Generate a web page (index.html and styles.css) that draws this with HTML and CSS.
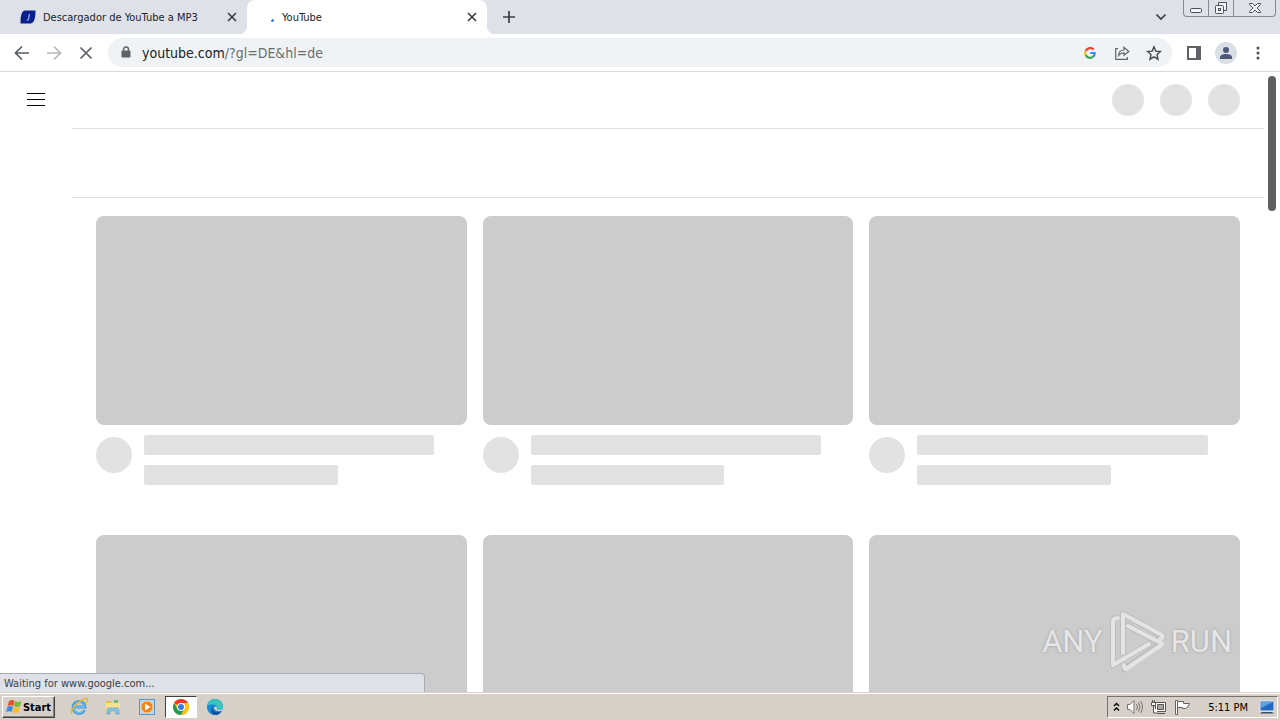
FILE: index.html
```html
<!DOCTYPE html>
<html lang="de">
<head>
    <meta charset="UTF-8">
    <meta name="viewport" content="width=device-width, initial-scale=1.0">
    <title>YouTube</title>
    <link rel="stylesheet" href="styles.css">
</head>
<body>
    <div class="desktop">
        <header class="tabs">
            <div class="tab">
                <svg class="favicon" viewBox="0 0 16 16"><path d="M5 1.500h10.500c0 5-.5 9-2 11-1 1.500-2 2-4 2H.5c0-5 .3-8 1.500-10.500C2.700 2.500 3.500 1.500 5 1.500z" fill="#0b1f8c"/><path d="M9.500 5l-1 5c-.2 1-.8 1.300-1.800 1" fill="none" stroke="#8fa2f0" stroke-width="1.300"/></svg>
                <span class="tab__title">Descargador de YouTube a MP3</span>
                <button class="tab__close" aria-label="Close tab"><svg width="10" height="10" viewBox="0 0 10 10"><path d="M1 1l8 8M9 1L1 9"/></svg></button>
            </div>
            <div class="tab active">
                <svg class="favicon" viewBox="0 0 16 16"><path d="M8.500 12.500l2-2" stroke="#1a73e8" stroke-width="2" fill="none"/></svg>
                <span class="tab__title">YouTube</span>
                <button class="tab__close" aria-label="Close tab"><svg width="10" height="10" viewBox="0 0 10 10"><path d="M1 1l8 8M9 1L1 9"/></svg></button>
            </div>
            <button class="tab__new" aria-label="New tab"><svg width="12" height="12" viewBox="0 0 12 12"><path d="M6 0v12M0 6h12"/></svg></button>
            <button class="tab__search" aria-label="Search tabs"><svg width="12" height="8" viewBox="0 0 12 8"><path d="M1.500 1.500L6 6l4.500-4.500"/></svg></button>
            <div class="window">
                <button class="window__min" aria-label="Minimize"><svg width="12" height="16" viewBox="0 0 12 16"><rect x=".5" y="8.500" width="11" height="4" rx="1"/></svg></button>
                <button class="window__max" aria-label="Restore"><svg width="14" height="16" viewBox="0 0 14 16"><path d="M4.500 5V2.500h8v8H10"/><rect x="1.500" y="5.500" width="8" height="8" rx="1"/><rect x="4.500" y="8.500" width="2" height="2"/></svg></button>
                <button class="window__close" aria-label="Close"><svg width="12" height="16" viewBox="0 0 12 16"><path d="M.5 3.500h3L6 6l2.500-2.500h3v1L8 8l3.500 3.500v1h-3L6 10l-2.500 2.500h-3v-1L4 8 .5 4.500z"/></svg></button>
            </div>
        </header>
        <div class="toolbar">
            <nav class="toolbar__nav">
                <button aria-label="Back"><svg width="16" height="16" viewBox="0 0 16 16"><path d="M15 8H2M8 1.500L1.500 8 8 14.500"/></svg></button>
                <button class="off" aria-label="Forward"><svg width="16" height="16" viewBox="0 0 16 16"><path d="M1 8h13M8 1.500L14.500 8 8 14.500"/></svg></button>
                <button aria-label="Stop"><svg width="16" height="16" viewBox="0 0 16 16"><path d="M2.500 2.500l11 11M13.500 2.500l-11 11"/></svg></button>
            </nav>
            <div class="omnibox">
                <svg width="10" height="13" viewBox="0 0 10 13"><path d="M2.500 5.500V3.500a2.500 2.500 0 0 1 5 0v2" fill="none" stroke="#5f6368" stroke-width="1.500"/><rect x=".5" y="4.500" width="9" height="7" rx="1" fill="#5f6368"/></svg>
                <a class="omnibox__url" href="#">youtube.com<span>/?gl=DE&amp;hl=de</span></a>
                <button aria-label="Google"><svg width="12" height="12" viewBox="0 0 12 12" fill="none" stroke-width="2.200"><path d="M9.700 2.600A4.800 4.800 0 0 0 1.700 3.900" stroke="#ea4335"/><path d="M1.700 3.900a4.800 4.800 0 0 0 0 4.200" stroke="#fbbc05"/><path d="M1.700 8.100a4.800 4.800 0 0 0 7.400 1.600" stroke="#34a853"/><path d="M9.100 9.700A4.800 4.800 0 0 0 10.700 6H6.200" stroke="#4285f4"/></svg></button>
                <button aria-label="Share"><svg width="16" height="16" viewBox="0 0 16 16" fill="none" stroke="#5f6368" stroke-width="1.200"><path d="M4 3.700H1.700v10.600h11.600V12M4.500 10.500c.3-4 2.300-5.500 5.500-5.500V2.300L14.800 6.500 10 10.300V7.800C7.500 7.800 6 8.500 4.500 10.500z"/></svg></button>
                <button aria-label="Bookmark"><svg width="16" height="16" viewBox="0 0 16 16" fill="none" stroke="#45494d" stroke-width="1.400"><path d="M8 1.800l1.800 4.300 4.700.4-3.500 3.100 1 4.600-4-2.400-4 2.400 1-4.600-3.500-3.100 4.700-.4z"/></svg></button>
            </div>
            <div class="toolbar__side">
                <button aria-label="Side panel"><svg width="14" height="14" viewBox="0 0 14 14"><rect x="1" y="1" width="12" height="12" fill="none" stroke="#5f6368" stroke-width="2"/><path d="M9 0h5v14H9z" fill="#5f6368"/></svg></button>
                <button aria-label="Profile"><svg width="22" height="22" viewBox="0 0 22 22"><circle cx="11" cy="11" r="11" fill="#dadfe5"/><circle cx="11" cy="8" r="3" fill="#4c5977"/><path d="M5 17v-2c0-2 3-3 6-3s6 1 6 3v2z" fill="#4c5977"/></svg></button>
                <button aria-label="Menu"><svg width="4" height="14" viewBox="0 0 4 14" fill="#4b4f53"><circle cx="2" cy="2" r="1.500"/><circle cx="2" cy="7" r="1.500"/><circle cx="2" cy="12" r="1.500"/></svg></button>
            </div>
        </div>

        <div class="view">
            <aside class="rail">
                <button aria-label="Guide"><svg width="18" height="13" viewBox="0 0 18 13"><path d="M0 .5h18M0 6.500h18M0 12.500h18" stroke="#000"/></svg></button>
            </aside>
            <main class="page">
                <div class="masthead"><i></i><i></i><i></i></div>
                <div class="chips"></div>
                <div class="grid">
                    <article class="video">
                        <div class="video__thumb"></div>
                        <div class="video__info"><i></i><div class="video__text"><b></b><b></b></div></div>
                    </article>
                    <article class="video">
                        <div class="video__thumb"></div>
                        <div class="video__info"><i></i><div class="video__text"><b></b><b></b></div></div>
                    </article>
                    <article class="video">
                        <div class="video__thumb"></div>
                        <div class="video__info"><i></i><div class="video__text"><b></b><b></b></div></div>
                    </article>
                    <article class="video"><div class="video__thumb"></div></article>
                    <article class="video"><div class="video__thumb"></div></article>
                    <article class="video"><div class="video__thumb"></div></article>
                </div>
            </main>
            <div class="scrollbar"><div class="scrollbar__thumb"></div></div>
            <div class="status">Waiting for www.google.com...</div>
            <div class="watermark">
                <span>ANY</span>
                <svg width="58" height="64" viewBox="0 0 58 64"><g class="shade"><path d="M15 44V5l40 22-4 3M10 9q-5 0-5 4v43l36-21M20 17l33 18-37 25v-4"/></g><g><path d="M15 44V5l39 21q2 2-2 4M10 9q-5 0-5 4v43l36-21M20 17l33 17q2 1-1 3L18 60q-2 0-2-4"/></g></svg>
                <span>RUN</span>
            </div>
        </div>

        <footer class="taskbar">
            <button class="start"><svg width="17" height="16" viewBox="0 0 17 16"><path d="M3 2q3-2 5.500 0L7.300 7Q5 5.500 1.700 7z" fill="#e8502a"/><path d="M9 2.300q3 1.500 6.500-.2L14 7.300q-2.700 1.500-6 0z" fill="#7ab83a"/><path d="M1.500 7.700q3-1.500 5.500 0l-1.300 5Q3.500 11.500.2 13z" fill="#3b8be0"/><path d="M7.600 8q3 1.500 6.100.2l-1.300 5q-3 1.300-6.100-.3z" fill="#f8bd25"/></svg>Start</button>
            <nav class="apps">
                <button aria-label="Internet Explorer"><svg width="18" height="18" viewBox="0 0 18 18" fill="none"><path d="M14.500 12A6 6 0 1 1 15 9H4" stroke="#3c9bdc" stroke-width="2.800"/><path d="M14 12A5.500 5.500 0 1 1 14.500 9H4" stroke="#7fd0f5"/><path d="M2 16C-1 13 7 4 13 1.500s5 .5 3 4" stroke="#ecb52f" stroke-width="1.500"/></svg></button>
                <button aria-label="Explorer"><svg width="18" height="18" viewBox="0 0 18 18"><path d="M2 3h5l1 2h7v9H2z" fill="#e7bd50"/><path d="M2 5h14v9H2z" fill="#f8e28e"/><path d="M10 2h4v3h-4z" fill="#74b966"/><path d="M3 16v-4q0-2 2-2h8q2 0 2 2v4h-3v-3H6v3z" fill="#8cc6e6" stroke="#4c94be" stroke-width=".6"/></svg></button>
                <button aria-label="Media Player"><svg width="18" height="18" viewBox="0 0 18 18"><rect x="1.500" y="1.500" width="15" height="15" fill="#b8d8ef" stroke="#5697cd"/><circle cx="9" cy="9" r="6" fill="#f18519" stroke="#f8c983"/><path d="M7 5.500L12.500 9 7 12.500z" fill="#fff"/></svg></button>
                <button class="on" aria-label="Chrome"><svg width="18" height="18" viewBox="0 0 18 18"><circle cx="9" cy="9" r="8" fill="#fbc116"/><path d="M9 9L2.100 5A8 8 0 0 1 15.900 5z" fill="#e33b2e"/><path d="M2.100 5A8 8 0 0 0 9 17l3.500-6L9 9 5.500 11z" fill="#229a4b"/><path d="M9 5h6.900A8 8 0 0 1 9 17l3.500-6z" fill="#fbc116"/><circle cx="9" cy="9" r="4" fill="#fff"/><circle cx="9" cy="9" r="3" fill="#397de8"/></svg></button>
                <button aria-label="Edge"><svg width="18" height="18" viewBox="0 0 18 18"><circle cx="9" cy="9" r="8" fill="#168bd2"/><path d="M1 9a8 8 0 0 1 16 0c0 3-4 4-6 2.500 1-3-1-5-4-5C4 6.500 2 7.500 1 9z" fill="#38c5bd"/><path d="M1.200 8C3 6 7 6 8 8c-3 1-3 6 1 9A8 8 0 0 1 1.200 8z" fill="#1689d9"/><path d="M7.500 8.500C5 11 8 16 15.300 13.500 13.500 16.500 11 17 9 17c-4-1-5-6-1.500-8.500z" fill="#124f9e"/><path d="M8.500 9c-1.500 2 1 4.500 7 4l2-2.500c-2 1.500-5 2-6.500 1 .5-1 0-2-1-3z" fill="#d6d0c8"/></svg></button>
            </nav>
            <div class="tray">
                <svg width="7" height="10" viewBox="0 0 7 10"><path d="M1 4l2.500-2.500L6 4M1 8.500L3.500 6 6 8.500" fill="none" stroke="#000" stroke-width="1.400"/></svg>
                <svg width="18" height="16" viewBox="0 0 18 16" fill="#fff" stroke="#77736e"><path d="M1.500 5.500H4l4-4v13l-4-4H1.500z"/><path d="M10.500 5q2 3 0 6M12.500 3.500q3 4.500 0 9M14.500 2q4 6 0 12" fill="none"/></svg>
                <svg width="18" height="16" viewBox="0 0 18 16" stroke="#55524e"><path d="M5.500 3.500h10v9h-10z" fill="#fff"/><path d="M7.500 5.500h6v5h-6z" fill="#aaa6a1"/><path d="M8 14.500h7M1.500 3.500h4v3h-4zM2.500 1v2M4.500 1v2M3.500 7v7H8" fill="#fff"/></svg>
                <svg width="18" height="16" viewBox="0 0 18 16" fill="#fff" stroke="#66625d"><path d="M1.500 1.500h2v14h-2z"/><path d="M3.500 2.500h6v2h6q-1 4-4 5h-3v-1h-5z"/></svg>
                <time>5:11 PM</time>
                <svg width="16" height="14" viewBox="0 0 16 14"><path d="M1 1h14v10H1z" fill="#2469c2" stroke="#eee"/><path d="M2 2h12L2 8z" fill="#5ba4e7"/><path d="M3 12h10l2 1.500H1z" fill="#394d68"/></svg>
            </div>
        </footer>
    </div>
</body>
</html>
```

FILE: styles.css
```css
* {
    margin: 0;
    padding: 0;
    box-sizing: border-box;
}
body {
    font-family: "DejaVu Sans Condensed", "DejaVu Sans", sans-serif;
    font-size: 11px;
    color: #202124;
    background-color: #fff;
}
button {
    display: flex;
    align-items: center;
    justify-content: center;
    flex-shrink: 0;
    border: 0;
    background: none;
    font: inherit;
    color: inherit;
}
svg {
    display: block;
    flex-shrink: 0;
}
.desktop {
    display: flex;
    flex-direction: column;
    height: 100vh;
    overflow: hidden;
}

/* tabs */
.tabs {
    display: flex;
    height: 34px;
    flex-shrink: 0;
    background-color: #dee1e8;
}
.tabs button svg {
    fill: none;
    stroke: #3c4043;
    stroke-width: 1.7;
}
.tab {
    position: relative;
    display: flex;
    align-items: center;
    width: 240px;
    padding: 0 8px 0 13px;
    margin-left: 7px;
}
.tab.active {
    margin-left: 0;
    padding-left: 16px;
    background-color: #fff;
    border-radius: 8px 8px 0 0;
}
.tab.active::before,
.tab.active::after {    /* curved feet of the active tab */
    content: "";
    position: absolute;
    bottom: 0;
    width: 8px;
    height: 8px;
}
.tab.active::before {
    right: 100%;
    background: radial-gradient(circle at 0 0, transparent 8px, #fff 8px);
}
.tab.active::after {
    left: 100%;
    background: radial-gradient(circle at 100% 0, transparent 8px, #fff 8px);
}
.favicon {
    width: 16px;
    height: 16px;
}
.tab__title {
    flex: 1;
    margin-left: 7px;
    white-space: nowrap;
}
.tab.active .tab__title {
    margin-left: 3px;
}
.tab__close {
    width: 14px;
}
.tab__new {
    width: 28px;
    margin-left: 8px;
}
.tab__search {
    width: 28px;
    margin-left: auto;
}
.window {
    display: flex;
    height: 17px;
    margin: 0 4px 0 8px;
    border: 1px solid #858a94;
    border-top: 0;
    border-radius: 0 0 4px 4px;
}
.tabs .window svg {
    stroke: #4b5059;
    stroke-width: 1;
    fill: #f4f5f8;
}
.window__min,
.window__max {
    width: 25px;
    border-right: 1px solid #858a94;
}
.window__close {
    width: 41px;
}

/* toolbar */
.toolbar {
    display: flex;
    align-items: center;
    height: 38px;
    flex-shrink: 0;
    padding: 0 6px;
    border-bottom: 1px solid #d8dadd;
    background-color: #fff;
}
.toolbar__nav {
    display: flex;
    width: 102px;
}
.toolbar__nav button {
    width: 32px;
    height: 30px;
    stroke: #5a5e62;
    stroke-width: 1.7;
    fill: none;
}
.toolbar__nav .off {
    stroke: #b5b7b9;
}
.omnibox {
    display: flex;
    align-items: center;
    flex: 1;
    height: 29px;
    padding: 0 2px 0 13px;
    border-radius: 15px;
    background-color: #f0f3f5;
}
.omnibox__url {
    flex: 1;
    margin-left: 11px;
    font-size: 14px;
    color: #202124;
    text-decoration: none;
}
.omnibox__url span {
    color: #6a6e72;
}
.omnibox button {
    width: 32px;
}
.toolbar__side {
    display: flex;
    align-items: center;
    margin-left: 6px;
}
.toolbar__side button {
    width: 32px;
}

/* page */
.view {
    position: relative;
    display: flex;
    flex: 1;
    min-height: 0;
    overflow: hidden;
}
.rail {
    width: 72px;
    flex-shrink: 0;
}
.rail button {
    width: 72px;
    height: 55px;
}
.page {
    flex: 1;
}
.masthead {
    display: flex;
    align-items: center;
    justify-content: flex-end;
    gap: 16px;
    height: 57px;
    padding-right: 24px;
    border-bottom: 1px solid #e0e0e0;
}
.masthead i {
    width: 32px;
    height: 32px;
    border-radius: 50%;
    background-color: #e2e2e2;
}
.chips {
    height: 69px;
    border-bottom: 1px solid #e0e0e0;
}
.grid {
    display: grid;
    grid-template-columns: repeat(3, 1fr);
    gap: 50px 16px;
    padding: 18px 24px 0;
}
.video__thumb {
    aspect-ratio: 39 / 22;
    border-radius: 8px;
    background-color: #ccc;
}
.video__info {
    display: flex;
    gap: 12px;
    margin-top: 10px;
}
.video__info i {
    width: 36px;
    height: 36px;
    margin-top: 2px;
    border-radius: 50%;
    background-color: #e2e2e2;
}
.video__text {
    flex: 1;
}
.video__text b {
    display: block;
    width: 90%;
    height: 20px;
    border-radius: 2px;
    background-color: #e2e2e2;
}
.video__text b + b {
    width: 60%;
    margin-top: 10px;
}
.scrollbar {
    width: 16px;
    padding: 4px;
}
.scrollbar__thumb {
    height: 22%;
    border-radius: 4px;
    background-color: #606060;
}
.status {
    position: absolute;
    left: 0;
    bottom: 0;
    width: 425px;
    height: 19px;
    padding-left: 4px;
    border: 1px solid #a9acb3;
    border-width: 1px 1px 0 0;
    border-radius: 0 4px 0 0;
    background-color: #dee1e8;
    color: #3c4043;
    line-height: 20px;
}
.watermark {
    position: absolute;
    right: 48px;
    bottom: 19px;
    display: flex;
    align-items: center;
    gap: 5px;
    font-family: Roboto, "Liberation Sans", sans-serif;
    font-size: 31px;
    color: #e6e6e6;
    text-shadow: 0 0 3px #999;
}
.watermark svg {
    fill: none;
    stroke: #e4e4e4;
    stroke-width: 4;
    stroke-linecap: round;
    stroke-linejoin: round;
}
.watermark .shade {
    stroke: #aaa;
    stroke-width: 6;
    opacity: .4;
}

/* taskbar */
.taskbar {
    display: flex;
    align-items: center;
    height: 28px;
    flex-shrink: 0;
    padding: 2px 2px 1px;
    border-top: 1px solid #d6d0c8;
    background-color: #d6d0c8;
    box-shadow: inset 0 1px #fff;
}
.start {
    width: 53px;
    height: 22px;
    border: 1px solid;
    border-color: #fff #404040 #404040 #fff;
    box-shadow: inset -1px -1px #87837d;
    font-weight: bold;
    color: #000;
}
.apps {
    display: flex;
    gap: 2px;
    margin-left: 8px;
}
.apps button {
    width: 32px;
    height: 22px;
}
.apps .on {
    border: 1px solid;
    border-color: #404040 #fff #fff #404040;
    background-color: #fff;
}
.tray {
    display: flex;
    align-items: center;
    gap: 6px;
    height: 22px;
    margin-left: auto;
    padding: 0 2px 0 5px;
    border: 1px solid;
    border-color: #77736e #fff #fff #77736e;
    color: #000;
}
.tray time {
    margin: 0 5px 0 10px;
}
```
